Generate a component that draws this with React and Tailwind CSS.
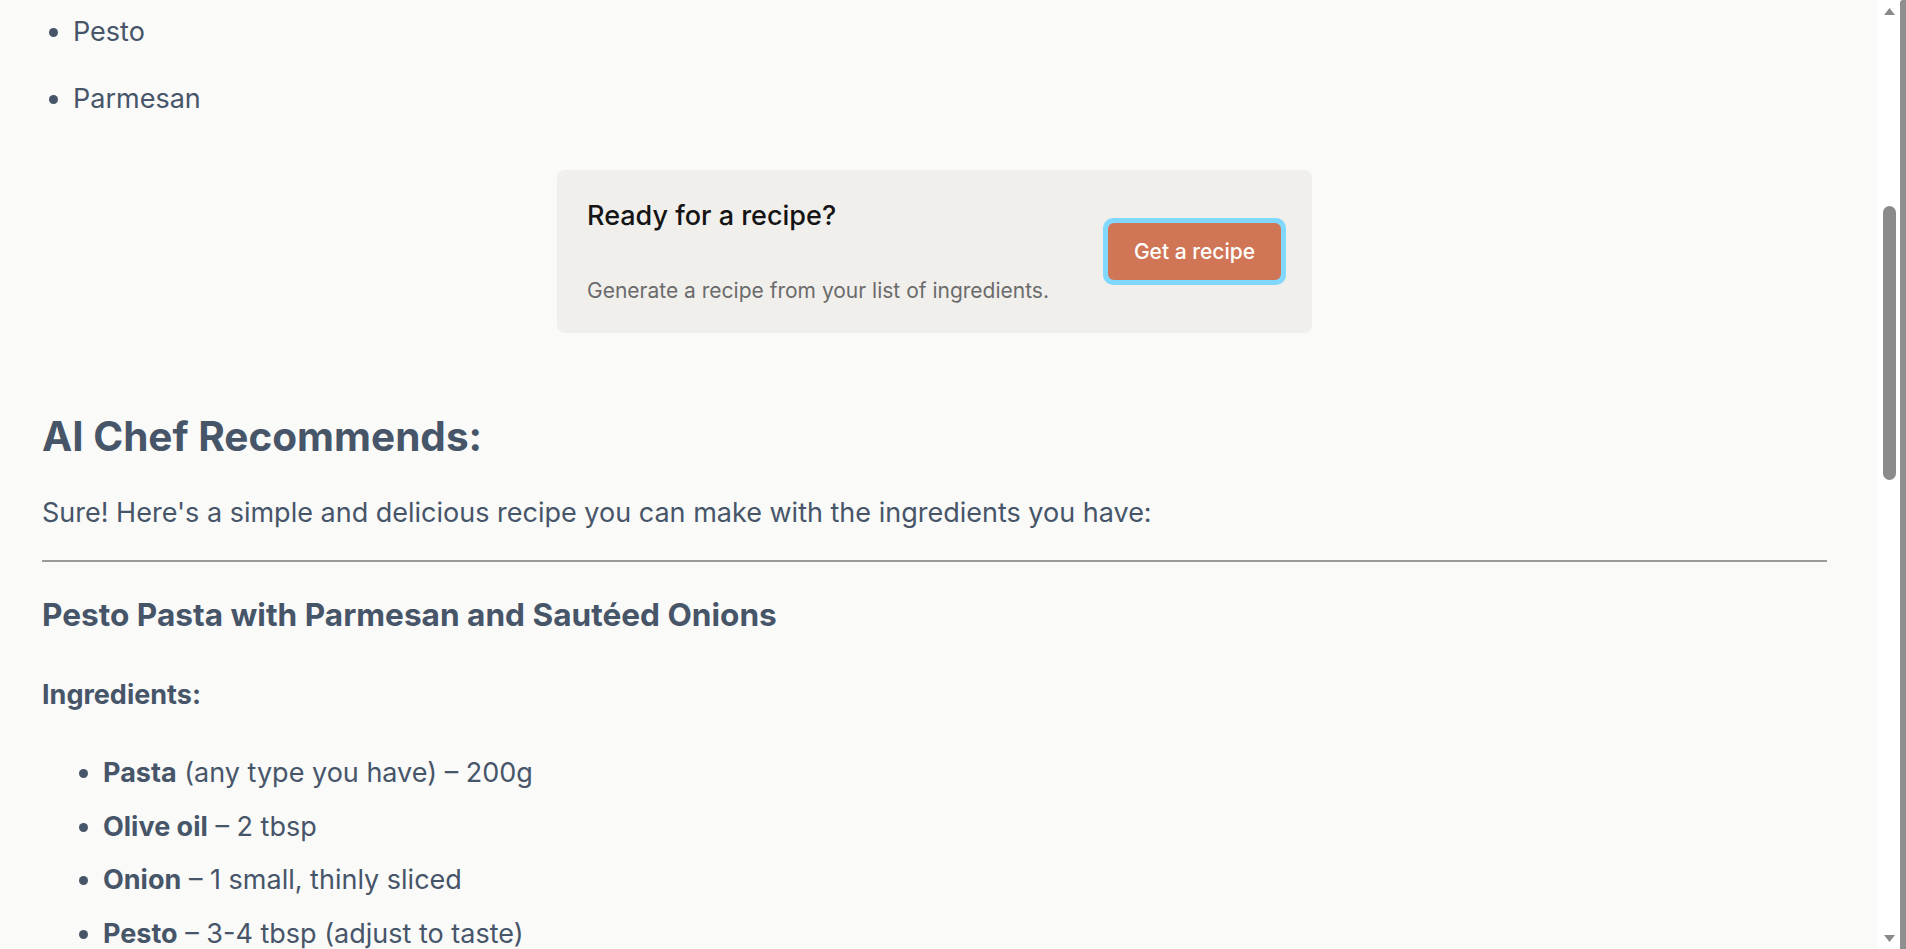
import React from 'react';

const ingredients = [
  { name: 'Pasta', rest: ' (any type you have) – 200g' },
  { name: 'Olive oil', rest: ' – 2 tbsp' },
  { name: 'Onion', rest: ' – 1 small, thinly sliced' },
  { name: 'Pesto', rest: ' – 3-4 tbsp (adjust to taste)' },
  { name: 'Parmesan', rest: ' – ¼ cup, grated' },
];

// fake window scrollbar (page is shown scrolled part way down)
const ScrollBar = () => (
  <div className="flex h-screen shrink-0">
    <div className="relative w-[23px] bg-white">
      <svg className="absolute left-[6px] top-[7px]" width="13" height="10" viewBox="0 0 13 10">
        <path d="M6.5 1 L12 8 L1 8 Z" fill="#8a8a8a" />
      </svg>
      <div className="absolute left-[6px] top-[206px] h-[274px] w-[13px] rounded-full bg-[#8b8b8b]" />
      <svg className="absolute bottom-[6px] left-[6px]" width="13" height="10" viewBox="0 0 13 10">
        <path d="M1 2 L12 2 L6.5 9 Z" fill="#8a8a8a" />
      </svg>
    </div>
    <div className="w-[6px] rounded-tl-[3px] bg-[#8f8f8f]" />
  </div>
);

export default function App() {
  return (
    <div className="flex h-screen w-full overflow-hidden bg-[#fafaf9] font-['Inter','Noto_Sans',sans-serif] text-[27px] text-[#475569]">
      <main className="min-w-0 flex-1 overflow-hidden pl-[42px] pr-[50px]">
        {/* --- Ingredient list (top, partly scrolled) --- */}
        <ul className="ml-[31px] mt-[12px] list-disc space-y-[27px] leading-[40px]">
          <li>Pesto</li>
          <li>Parmesan</li>
        </ul>

        {/* --- Get a recipe card --- */}
        <div className="mx-auto mt-[51px] flex h-[163px] w-[755px] justify-between rounded-[8px] bg-[#f0efeb] pl-[30px] pr-[26px]">
          <div className="flex flex-col pt-[28px]">
            <h3 className="text-[27px] font-medium leading-[36px] text-[#141414]">Ready for a recipe?</h3>
            <p className="mt-[43px] text-[21px] leading-[28px] text-[#6b6b6b]">Generate a recipe from your list of ingredients.</p>
          </div>
          <button className="h-[67px] self-center rounded-[10px] bg-[#80d8ff] p-[5px]">
            <span className="flex h-full items-center rounded-[6px] bg-[#d17557] px-[26px] text-[21px] font-medium text-white">
              Get a recipe
            </span>
          </button>
        </div>

        {/* --- Recipe --- */}
        <section className="mt-[80px]">
          <h2 className="text-[40.5px] font-bold leading-[48px]">AI Chef Recommends:</h2>
          <p className="mt-[34px] leading-[36px]">
            Sure! Here's a simple and delicious recipe you can make with the ingredients you have:
          </p>
          <hr className="mt-[29px] border-t-[2px] border-[#9a9a9a]" />
          <h3 className="mt-[33px] text-[31.6px] font-bold leading-[40px]">Pesto Pasta with Parmesan and Sautéed Onions</h3>
          <p className="mt-[42px] font-bold leading-[36px]">Ingredients:</p>
          <ul className="ml-[61px] mt-[42px] list-disc space-y-[17.5px] leading-[36px]">
            {ingredients.map((item) => (
              <li key={item.name}>
                <strong className="font-bold">{item.name}</strong>
                {item.rest}
              </li>
            ))}
          </ul>
        </section>
      </main>
      <ScrollBar />
    </div>
  );
}
